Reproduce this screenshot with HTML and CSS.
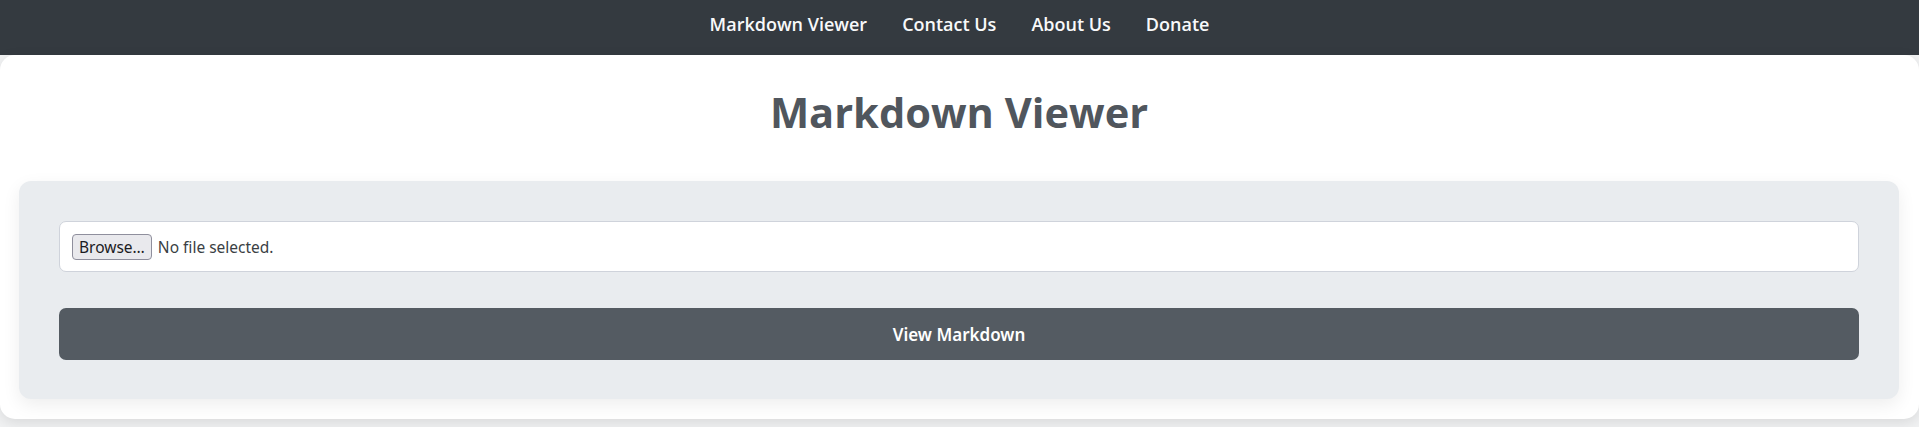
FILE: index.html
```html
<!DOCTYPE html>
<html lang="en">
<head>
<meta charset="utf-8">
<title>Markdown Viewer</title>
<link rel="stylesheet" href="styles.css">
</head>
<body>
<nav class="navbar">
  <a class="nav-link" href="#">Markdown Viewer</a>
  <a class="nav-link" href="#">Contact Us</a>
  <a class="nav-link" href="#">About Us</a>
  <a class="nav-link" href="#">Donate</a>
</nav>
<main class="card">
  <h1 class="title">Markdown Viewer</h1>
  <section class="panel">
    <div class="file-input">
      <span class="browse">Browse…</span>
      <span class="file-status">No file selected.</span>
    </div>
    <button class="view-btn" type="button">View Markdown</button>
  </section>
</main>
</body>
</html>
```
FILE: styles.css
```css
html, body {
  margin: 0;
  padding: 0;
}
body {
  background: #f1f2f3;
  font-family: "Open Sans", "Liberation Sans", sans-serif;
  overflow: hidden;
}
.navbar {
  height: 55px;
  box-sizing: border-box;
  padding-top: 12px;
  background: #343a40;
  display: flex;
  justify-content: center;
  align-items: flex-start;
}
.nav-link {
  color: #f8f9fa;
  text-decoration: none;
  font-size: 18px;
  font-weight: 600;
  padding: 0 17.5px;
  line-height: 24px;
}
.card {
  background: #ffffff;
  border-radius: 15px;
  box-shadow: 0 4px 14px rgba(0, 0, 0, 0.10);
  padding: 20px 20px 20px 19px;
  margin-bottom: 8px;
}
.title {
  margin: 0;
  text-align: center;
  font-size: 41.6px;
  font-weight: 700;
  color: #50565d;
  line-height: 56px;
  padding: 9px 0 41px;
}
.panel {
  background: #e9ecef;
  border-radius: 12px;
  box-shadow: 0 6px 18px rgba(0, 0, 0, 0.07);
  padding: 40px 40px 39px;
  display: flex;
  flex-direction: column;
  gap: 36px;
}
.file-input {
  height: 51px;
  box-sizing: border-box;
  background: #ffffff;
  border: 1px solid #cfd3db;
  border-radius: 7px;
  display: flex;
  align-items: center;
  padding: 0 12px;
  gap: 6px;
  font-family: "Noto Sans", "Open Sans", sans-serif;
  font-size: 15.5px;
  color: #3a3f44;
}
.browse {
  background: #e9e9ed;
  border: 1px solid #8f8f9d;
  border-radius: 4px;
  padding: 0 6px;
  height: 26px;
  line-height: 24px;
  box-sizing: border-box;
  color: #1b1b1f;
}
.view-btn {
  height: 52px;
  border: 0;
  border-radius: 7px;
  background: #545b62;
  color: #ffffff;
  font-family: "Noto Sans", "Open Sans", sans-serif;
  font-size: 17px;
  font-weight: 600;
  cursor: pointer;
}
```
